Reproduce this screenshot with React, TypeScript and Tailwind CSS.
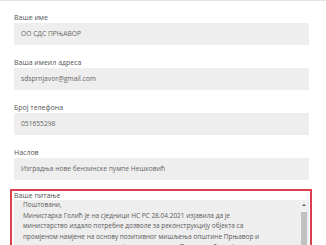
import React from 'react';

const fields = [
  { label: 'Ваше име', value: 'ОО СДС ПРЊАВОР' },
  { label: 'Ваша имеил адреса', value: 'sdsprnjavor@gmail.com' },
  { label: 'Број телефона', value: '051655298' },
  { label: 'Наслов', value: 'Изградња нове бензинске пумпе Нешковић' },
];

const question = [
  'Поштовани,',
  'Министарка Голић је на сједници НС РС 28.04.2021 изјавила да је',
  'министарство издало потребне дозволе за реконструкцију објекта са',
  'промјеном намјене на основу позитивног мишљења општине Прњавор и',
  'сагласности свих надлежних одјељења општине Прњавор. Да ли је то тачно',
];

export default function App() {
  return (
    <div
      className="w-[326px] h-[245px] overflow-hidden bg-white border-t border-[#e2e2e2]"
      style={{ fontFamily: '"Open Sans", "Noto Sans", sans-serif' }}
    >
      <div className="pl-[14px] w-[309px] pt-[11px] flex flex-col gap-[12px]">
        {fields.map((f) => (
          <div key={f.label}>
            <p className="text-[7px] leading-[11px] text-[#555]">{f.label}</p>
            <div className="h-[22px] bg-[#eeeeee] flex items-center pl-[7px] text-[6.7px] text-[#666]">
              {f.value}
            </div>
          </div>
        ))}
      </div>

      <div className="mt-[9px] ml-[10px] w-[302px] border-2 border-[#d9404f] pl-[2px] pr-[1px]">
        <p className="text-[7px] leading-[8px] pt-[1px] text-[#555]">Ваше питање</p>
        <div className="relative bg-[#eeeeee] h-[60px] pl-[9px] pt-0 text-[6.5px] leading-[10.5px] text-[#5a5a5a]">
          {question.map((l) => (
            <div key={l} className="whitespace-nowrap">
              {l}
            </div>
          ))}
          <div className="absolute right-[2px] top-0 w-[7px] h-full bg-[#f1f1f1] flex flex-col items-center">
            <div className="mt-[4px] w-0 h-0 border-l-[2px] border-r-[2px] border-b-[2px] border-l-transparent border-r-transparent border-b-[#555]" />
            <div className="mt-[6px] w-[6px] flex-1 bg-[#c1c1c1]" />
          </div>
        </div>
      </div>
    </div>
  );
}
